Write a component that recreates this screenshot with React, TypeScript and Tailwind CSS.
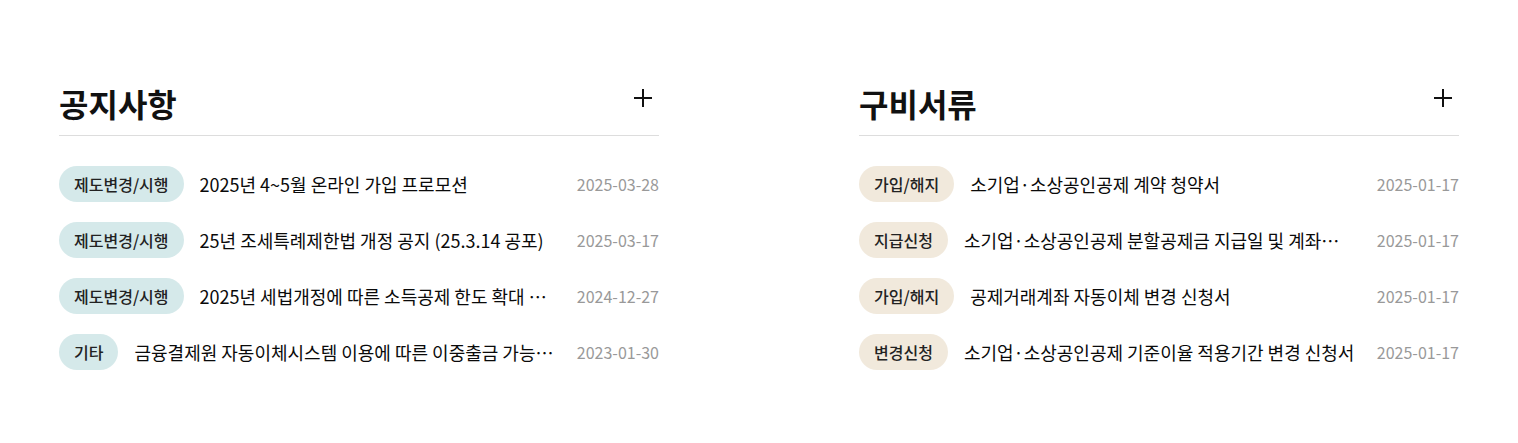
import React from "react";

type Item = { tag: string; title: string; date: string };

const notices: Item[] = [
  { tag: "제도변경/시행", title: "2025년 4~5월 온라인 가입 프로모션", date: "2025-03-28" },
  { tag: "제도변경/시행", title: "25년 조세특례제한법 개정 공지 (25.3.14 공포)", date: "2025-03-17" },
  { tag: "제도변경/시행", title: "2025년 세법개정에 따른 소득공제 한도 확대 안내", date: "2024-12-27" },
  { tag: "기타", title: "금융결제원 자동이체시스템 이용에 따른 이중출금 가능성 안내", date: "2023-01-30" },
];

const docs: Item[] = [
  { tag: "가입/해지", title: "소기업·소상공인공제 계약 청약서", date: "2025-01-17" },
  { tag: "지급신청", title: "소기업·소상공인공제 분할공제금 지급일 및 계좌변경 신청서", date: "2025-01-17" },
  { tag: "가입/해지", title: "공제거래계좌 자동이체 변경 신청서", date: "2025-01-17" },
  { tag: "변경신청", title: "소기업·소상공인공제 기준이율 적용기간 변경 신청서", date: "2025-01-17" },
];

function Plus() {
  return (
    <svg width="18" height="18" viewBox="0 0 18 18" fill="none">
      <path d="M9 0v18M0 9h18" stroke="#111" strokeWidth="2" />
    </svg>
  );
}

function Section({ title, items, tagBg }: { title: string; items: Item[]; tagBg: string }) {
  return (
    <section className="w-[600px]">
      <div className="flex items-start justify-between border-b border-[#dddddd] pb-[12px]">
        <h2 className="text-[32px] leading-[40px] font-bold text-[#111]">{title}</h2>
        <button className="mr-[7px] mt-[6px] flex h-[18px] items-center">
          <Plus />
        </button>
      </div>
      <ul className="mt-[30px] flex flex-col gap-[20px]">
        {items.map((it, i) => (
          <li key={i} className="flex h-[36px] items-center">
            <span
              className={`${tagBg} shrink-0 rounded-full px-[15px] h-[36px] flex items-center text-[16px] font-medium text-[#222]`}
            >
              {it.tag}
            </span>
            <span className="ml-[16px] min-w-0 flex-1 truncate text-[18px] text-[#0a0a0a]">{it.title}</span>
            <span className="ml-[22px] shrink-0 text-[16px] text-[#999]">{it.date}</span>
          </li>
        ))}
      </ul>
    </section>
  );
}

export default function App() {
  return (
    <div className="h-[443px] w-full bg-white font-['Noto_Sans_CJK_KR',sans-serif] [font-feature-settings:'palt']">
      <div className="flex justify-center gap-[200px] pt-[83px]">
        <Section title="공지사항" items={notices} tagBg="bg-[#d5e9ea]" />
        <Section title="구비서류" items={docs} tagBg="bg-[#f1e9dc]" />
      </div>
    </div>
  );
}
